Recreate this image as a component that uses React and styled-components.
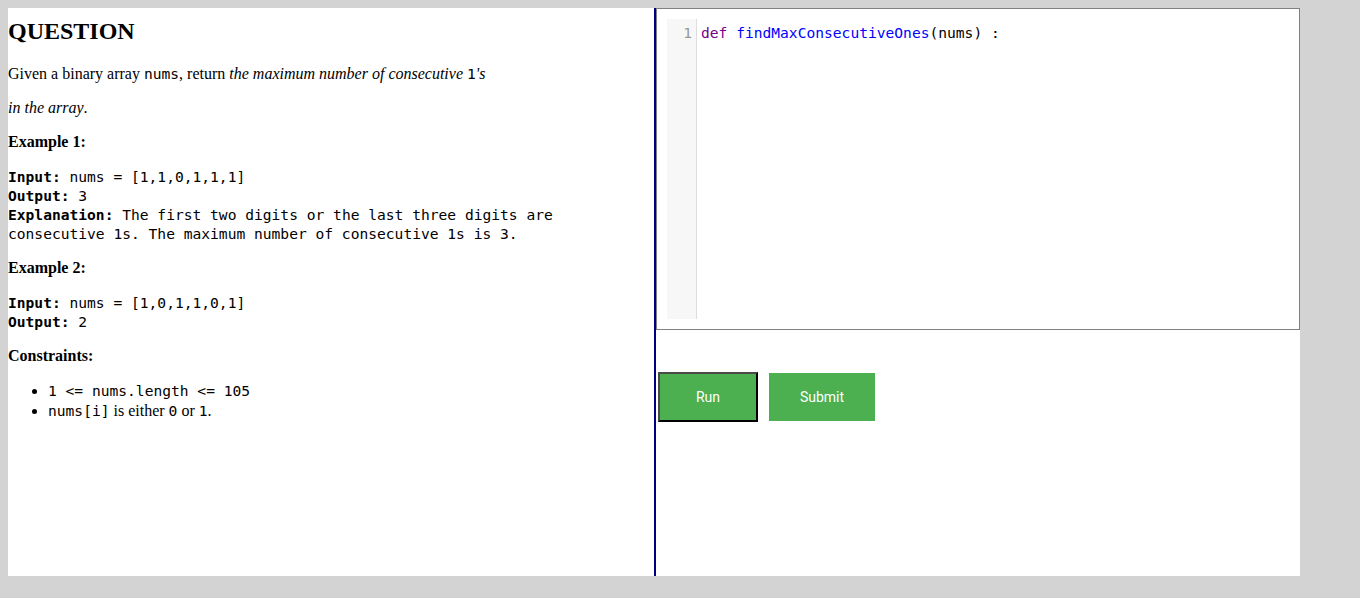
import React from 'react';
import styled, { createGlobalStyle } from 'styled-components';

const mono = `"DejaVu Sans Mono", "Liberation Mono", monospace`;

const GlobalStyle = createGlobalStyle`
  body {
    margin: 8px;
    background: #d3d3d3;
    font-family: "Liberation Serif", "Times New Roman", serif;
    color: #000;
  }
`;

// PAGE LAYOUT
const Workspace = styled.div`
  display: flex;
  width: 95vw;
  height: 95vh;
  background: #ffffff;
`;

const QuestionPanel = styled.div`
  flex: 0 0 648px;
  box-sizing: border-box;
  border-right: 2px solid #000080;
  overflow: hidden;
  font-size: 16px;
`;

const Title = styled.h2`
  font-size: 24px;
  font-weight: bold;
  margin: 10px 0 20px;
`;

const Para = styled.p`
  margin: 16px 0;
`;

const Code = styled.code`
  font-family: ${mono};
  font-size: 14.6px;
`;

const Sample = styled.pre`
  font-family: ${mono};
  font-size: 14.6px;
  line-height: 19px;
  margin: 16px 0;
  white-space: pre-wrap;
`;

const Constraints = styled.ul`
  margin: 16px 0;
  padding-left: 40px;
  line-height: 20px;
`;

// EDITOR SIDE
const EditorPanel = styled.div`
  flex: 1;
  display: flex;
  flex-direction: column;
`;

const EditorBox = styled.div`
  box-sizing: border-box;
  height: 322px;
  padding: 10px;
  border: 1px solid #808080;
`;

const CodeMirror = styled.div`
  display: flex;
  height: 300px;
  font-family: ${mono};
  font-size: 14.6px;
`;

const Gutter = styled.div`
  box-sizing: border-box;
  width: 30px;
  padding: 4px 4px 0 0;
  background: #f7f7f7;
  border-right: 1px solid #dddddd;
  color: #999999;
  text-align: right;
  line-height: 20px;
`;

const Lines = styled.div`
  flex: 1;
  padding: 4px 4px 0;
  line-height: 20px;
  white-space: pre;
`;

const Token = styled.span`
  color: ${p => p.$kind === 'keyword' ? '#770088' : p.$kind === 'def' ? '#0000ff' : '#000000'};
`;

const ButtonRow = styled.div`
  display: flex;
  align-items: center;
  gap: 11px;
  margin-top: 42px;
  padding-left: 2px;
`;

const Button = styled.button`
  box-sizing: border-box;
  width: ${p => p.$width}px;
  height: ${p => (p.$focused ? 50 : 48)}px;
  padding: 0;
  background: #4caf50;
  color: #ffffff;
  font-family: Roboto, "Liberation Sans", sans-serif;
  font-size: 14px;
  border: ${p => (p.$focused ? '2px solid' : 'none')};
  border-color: #4a4a4a #000000 #000000 #4a4a4a;
  cursor: pointer;
`;

const App = () => {
  return (
    <>
      <GlobalStyle />
      <Workspace>
        <QuestionPanel>
          <Title>QUESTION</Title>
          <Para>
            Given a binary array <Code>nums</Code>, return <em>the maximum number of consecutive </em><Code>1</Code><em>'s</em>
          </Para>
          <Para><em>in the array</em>.</Para>
          <Para><strong>Example 1:</strong></Para>
          <Sample>
            <strong>Input:</strong> nums = [1,1,0,1,1,1]{'\n'}
            <strong>Output:</strong> 3{'\n'}
            <strong>Explanation:</strong> The first two digits or the last three digits are{'\n'}consecutive 1s. The maximum number of consecutive 1s is 3.
          </Sample>
          <Para><strong>Example 2:</strong></Para>
          <Sample>
            <strong>Input:</strong> nums = [1,0,1,1,0,1]{'\n'}
            <strong>Output:</strong> 2
          </Sample>
          <Para><strong>Constraints:</strong></Para>
          <Constraints>
            <li><Code>1 &lt;= nums.length &lt;= 105</Code></li>
            <li><Code>nums[i]</Code> is either <Code>0</Code> or <Code>1</Code>.</li>
          </Constraints>
        </QuestionPanel>
        <EditorPanel>
          <EditorBox>
            <CodeMirror>
              <Gutter>1</Gutter>
              <Lines>
                <Token $kind="keyword">def</Token> <Token $kind="def">findMaxConsecutiveOnes</Token>(nums) :
              </Lines>
            </CodeMirror>
          </EditorBox>
          <ButtonRow>
            <Button $width={100} $focused>Run</Button>
            <Button $width={106}>Submit</Button>
          </ButtonRow>
        </EditorPanel>
      </Workspace>
    </>
  );
};

export default App;
